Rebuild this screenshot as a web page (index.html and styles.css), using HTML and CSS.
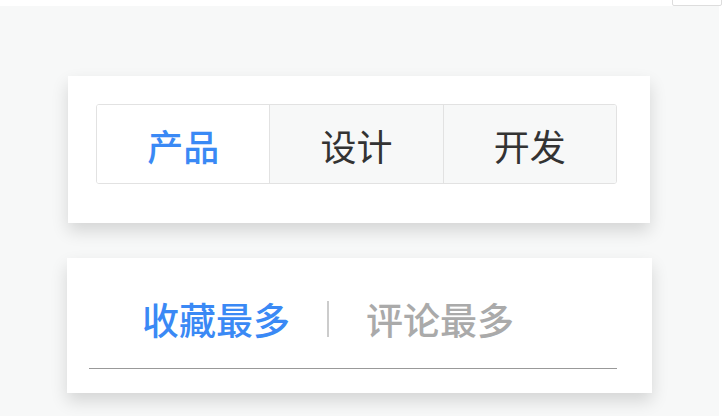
FILE: index.html
```html
<!DOCTYPE html>
<html lang="zh-CN">
<head>
    <meta charset="UTF-8">
    <meta name="viewport" content="width=device-width, initial-scale=1.0">
    <title>Tabs</title>
    <link rel="stylesheet" href="styles.css">
</head>
<body>
    <div class="corner"></div>
    <div class="page">
        <div class="card card-seg">
            <div class="segmented">
                <div class="seg-item active">产品</div>
                <div class="seg-item">设计</div>
                <div class="seg-item">开发</div>
            </div>
        </div>
        <div class="card card-tabs">
            <div class="tabs">
                <div class="tab active">收藏最多</div>
                <div class="tab-sep"></div>
                <div class="tab">评论最多</div>
            </div>
            <div class="tabs-line"></div>
        </div>
    </div>
</body>
</html>
```

FILE: styles.css
```css
html, body {
    margin: 0;
    padding: 0;
    background: #fff;
    font-family: "Noto Sans CJK SC", "Noto Sans", sans-serif;
    overflow: hidden;
}
.corner {
    position: absolute;
    top: -1px;
    right: 1px;
    width: 48px;
    height: 5px;
    border: 1px solid #ddd;
    border-radius: 0 0 2px 2px;
    background: #fff;
}
.page {
    margin: 6px 4px 0 0;
    height: 410px;
    background: #f7f8f8;
    padding-top: 70px;
    box-sizing: border-box;
}
.card {
    background: #fff;
    box-shadow: 0 8px 16px rgba(0, 0, 0, 0.14);
}
.card-seg {
    margin-left: 68px;
    width: 582px;
    height: 147px;
    padding: 28px;
    box-sizing: border-box;
}
.segmented {
    display: flex;
    width: 521px;
    height: 80px;
    border: 1px solid #e2e2e2;
    border-radius: 3px;
    box-sizing: border-box;
    overflow: hidden;
}
.seg-item {
    flex: 1;
    display: flex;
    align-items: center;
    justify-content: center;
    padding-top: 2px;
    background: #f7f8f8;
    border-left: 1px solid #e2e2e2;
    color: #333;
    font-size: 36px;
}
.seg-item:first-child {
    border-left: none;
}
.seg-item.active {
    background: #fff;
    color: #3a89f5;
    font-weight: 500;
}
.card-tabs {
    margin: 35px 0 0 67px;
    width: 585px;
    height: 135px;
    padding: 0 35px 0 22px;
    box-sizing: border-box;
}
.tabs {
    display: flex;
    align-items: center;
    height: 110px;
    padding: 12px 0 0 53px;
    box-sizing: border-box;
}
.tab {
    font-size: 37px;
    font-weight: 500;
    color: #aaa;
}
.tab.active {
    color: #3a89f5;
}
.tab-sep {
    width: 2px;
    height: 36px;
    margin: 0 37px;
    background: #ccc;
}
.tabs-line {
    height: 1px;
    background: #999;
}
```
